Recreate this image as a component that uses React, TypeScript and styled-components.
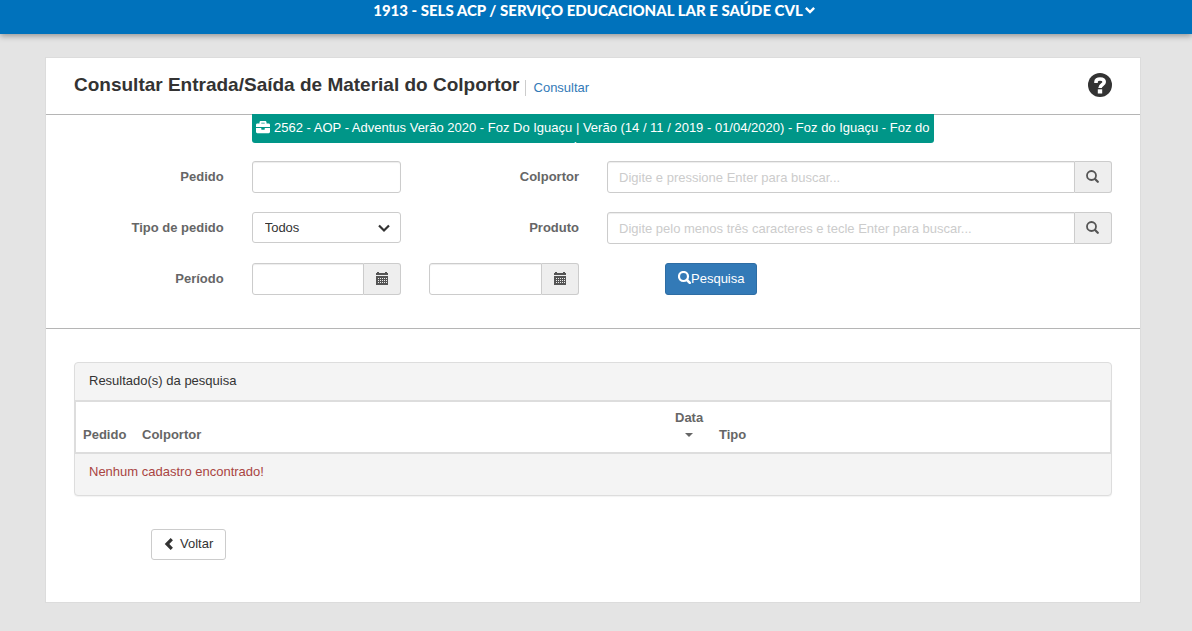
import React from "react";
import styled, { createGlobalStyle } from "styled-components";
import { FaBriefcase } from "react-icons/fa";

const GlobalStyle = createGlobalStyle`
  *, *::before, *::after { box-sizing: border-box; }
  body {
    margin: 0;
    background: #e4e4e4;
    color: #333;
    font: 13px/18px "Liberation Sans", Arial, sans-serif;
  }
  input, select, button { font: inherit; color: inherit; }
`;

const TopBar = styled.header`
  display: flex;
  justify-content: center;
  height: 34px;
  padding-right: 4px;
  background: #0072bc;
  box-shadow: 0 2px 6px rgba(0, 0, 0, 0.35);
`;

const UnitButton = styled.button`
  display: flex;
  align-items: center;
  gap: 2px;
  height: 20px;
  padding: 0;
  border: 0;
  background: none;
  color: #fff;
  font: 900 15px/20px Lato, sans-serif;
  cursor: pointer;
`;

const Page = styled.main`
  padding: 23px 51px 28px 45px;
`;

const Card = styled.section`
  border: 1px solid #dcdcdc;
  background: #fff;
`;

const CardHeader = styled.div`
  display: flex;
  align-items: center;
  height: 57px;
  padding: 0 28px 2px;
  border-bottom: 1px solid #b5b5b5;
`;

const Title = styled.h1`
  margin: 0;
  font-size: 19px;
  line-height: 24px;
`;

const Crumb = styled.a`
  margin: 6px auto 0 5px;
  padding-left: 8px;
  border-left: 1px solid #ccc;
  color: #337ab7;
  line-height: 16px;
  text-decoration: none;
`;

const HelpButton = styled.button`
  display: flex;
  padding: 0;
  border: 0;
  background: none;
  cursor: pointer;
`;

const SearchForm = styled.form`
  display: grid;
  grid-template-columns: repeat(6, 1fr);
  column-gap: 28px;
  row-gap: 19px;
  padding: 0 28px 33px;
  border-bottom: 1px solid #b5b5b5;
`;

const Campaign = styled.div`
  grid-column: 2 / span 4;
  height: 29px;
  margin: -1px 0;
  padding: 4px 2px 0;
  overflow: hidden;
  border-radius: 0 0 3px 3px;
  background: #009688;
  color: #fff;
  line-height: 19px;
  text-align: center;

  svg { vertical-align: -2px; }
`;

const Label = styled.label<{ $col?: number }>`
  grid-column-start: ${(p) => p.$col ?? 1};
  padding-top: 7px;
  color: #666;
  font-weight: bold;
  text-align: right;
`;

const fieldFrame = `
  width: 100%;
  height: 32px;
  border: 1px solid #ccc;
  border-radius: 3px;
  background: #fff;
`;

const TextInput = styled.input`
  ${fieldFrame}
  min-width: 0;
  padding: 0 11px;
  box-shadow: inset 0 1px 1px rgba(0, 0, 0, 0.075);
  &::placeholder { color: #ccc; opacity: 1; }
`;

const Group = styled.div<{ $span?: number }>`
  grid-column-end: span ${(p) => p.$span ?? 1};
  display: flex;
  min-width: 0;

  ${TextInput} {
    flex: 1;
    border-radius: 3px 0 0 3px;
  }
`;

const AddOn = styled.button`
  display: flex;
  flex: none;
  align-items: center;
  justify-content: center;
  width: 37px;
  height: 32px;
  padding: 0 1px 1px 0;
  border: 1px solid #ccc;
  border-left: 0;
  border-radius: 0 3px 3px 0;
  background: #eee;
  color: #555;
`;

const SelectBox = styled.div`
  display: grid;
  align-items: center;
  height: 31px;

  > * { grid-area: 1 / 1; }
  svg { justify-self: end; margin-right: 11px; pointer-events: none; }
`;

const Select = styled.select`
  ${fieldFrame}
  height: 31px;
  padding: 0 12px;
  appearance: none;
`;

const SubmitButton = styled.button`
  grid-column: 4 / span 2;
  justify-self: start;
  display: flex;
  align-items: center;
  height: 32px;
  margin-left: 58px;
  padding: 0 12px;
  border: 1px solid #2e6da4;
  border-radius: 3px;
  background: #337ab7;
  color: #fff;
  cursor: pointer;

  svg { margin-bottom: 3px; }
`;

const Results = styled.section`
  margin: 33px 28px;
  border: 1px solid #ddd;
  border-radius: 4px;
  background: #f4f4f4;
  box-shadow: 0 1px 1px rgba(0, 0, 0, 0.05);
`;

const ResultsTitle = styled.h2`
  height: 38px;
  margin: 0;
  padding: 9px 14px;
  font-size: 13px;
  font-weight: normal;
  line-height: 18px;
`;

const ResultsTable = styled.table`
  width: 100%;
  border: 1px solid #ddd;
  border-collapse: separate;
  border-spacing: 0;
  outline: 1px solid #ddd;
  background: #fff;
  table-layout: fixed;
  color: #666;
`;

const Th = styled.th<{ $width?: string }>`
  width: ${(p) => p.$width ?? "auto"};
  height: 50px;
  padding: 7px 7px 9px;
  line-height: 17px;
  text-align: left;
  vertical-align: bottom;
`;

const SortButton = styled.button`
  display: flex;
  flex-direction: column;
  align-items: center;
  padding: 0;
  border: 0;
  background: none;
  font-weight: bold;

  &::after {
    content: "";
    margin: 7px 0 6px;
    border: 4px solid transparent;
    border-top-color: currentColor;
    border-bottom: 0;
  }
`;

const EmptyNote = styled.p`
  height: 42px;
  margin: 0;
  padding: 10px 14px;
  color: #a94442;
`;

const BackButton = styled.button`
  display: flex;
  align-items: center;
  gap: 7px;
  height: 31px;
  margin: 0 0 42px 105px;
  padding: 0 12px 2px;
  border: 1px solid #ccc;
  border-radius: 3px;
  background: #fff;
  cursor: pointer;
`;

const SearchIcon = ({ weight = 1.8 }: { weight?: number }) => (
  <svg width="13" height="13" viewBox="0 0 13 13" fill="none" stroke="currentColor" aria-hidden="true">
    <circle cx="5.500" cy="5.500" r="4.500" strokeWidth={weight} />
    <path d="M9 9l2.800 2.800" strokeWidth={weight + 0.4} strokeLinecap="round" />
  </svg>
);

const CalendarIcon = () => (
  <svg width="12" height="13" viewBox="0 0 12 13" fill="currentColor" aria-hidden="true">
    <path d="M0 1h1V0h2v1h6V0h2v1h1v2H0z" />
    <path
      fillRule="evenodd"
      d="M0 4h12v9H0zM2 6v1h1V6zM4 6v1h1V6zM6 6v1h1V6zM8 6v1h1V6zM10 6v1h1V6zM2 8v1h1V8zM4 8v1h1V8zM6 8v1h1V8zM8 8v1h1V8zM10 8v1h1V8zM2 10v1h1v-1zM4 10v1h1v-1zM6 10v1h1v-1zM8 10v1h1v-1zM10 10v1h1v-1z"
    />
  </svg>
);

const ChevronDown = ({ size = 12, weight = 2.2 }: { size?: number; weight?: number }) => (
  <svg width={size} height={size} viewBox="0 0 12 12" fill="none" stroke="currentColor" strokeWidth={weight} aria-hidden="true">
    <path d="M1 3.5l5 5 5-5" />
  </svg>
);

const ChevronLeft = () => (
  <svg width="9" height="12" viewBox="0 0 9 12" fill="none" stroke="currentColor" strokeWidth="3.2" aria-hidden="true">
    <path d="M7.8 1.2L3 6l4.8 4.8" />
  </svg>
);

const HelpIcon = () => (
  <svg width="24" height="24" viewBox="0 0 24 24" aria-hidden="true">
    <circle cx="12" cy="12" r="12" fill="#333" />
    <path d="M8 10V9c0-2 1.500-3 4-3s4.200 1 4.200 3c0 3-4.200 2.600-4.200 6" fill="none" stroke="#fff" strokeWidth="3.600" />
    <path d="M9.800 16.300h4.400v4.200H9.800z" fill="#fff" />
  </svg>
);

const App = () => (
  <>
    <GlobalStyle />
    <TopBar>
      <UnitButton type="button">
        1913 - SELS ACP / SERVIÇO EDUCACIONAL LAR E SAÚDE CVL
        <ChevronDown size={10} weight={3} />
      </UnitButton>
    </TopBar>
    <Page>
      <Card>
        <CardHeader>
          <Title>Consultar Entrada/Saída de Material do Colportor</Title>
          <Crumb href="#consultar">Consultar</Crumb>
          <HelpButton type="button" aria-label="Ajuda">
            <HelpIcon />
          </HelpButton>
        </CardHeader>
        <SearchForm onSubmit={(e) => e.preventDefault()}>
          <Campaign>
            <FaBriefcase size={14} /> 2562 - AOP - Adventus Verão 2020 - Foz Do Iguaçu | Verão (14 / 11 / 2019 -
            01/04/2020) - Foz do Iguaçu - Foz do Iguaçu
          </Campaign>

          <Label htmlFor="pedido">Pedido</Label>
          <TextInput id="pedido" />
          <Label htmlFor="colportor" $col={3}>Colportor</Label>
          <Group $span={3}>
            <TextInput id="colportor" placeholder="Digite e pressione Enter para buscar..." />
            <AddOn type="button" aria-label="Buscar colportor"><SearchIcon /></AddOn>
          </Group>

          <Label htmlFor="tipo">Tipo de pedido</Label>
          <SelectBox>
            <Select id="tipo" defaultValue="Todos">
              <option>Todos</option>
            </Select>
            <ChevronDown />
          </SelectBox>
          <Label htmlFor="produto" $col={3}>Produto</Label>
          <Group $span={3}>
            <TextInput id="produto" placeholder="Digite pelo menos três caracteres e tecle Enter para buscar..." />
            <AddOn type="button" aria-label="Buscar produto"><SearchIcon /></AddOn>
          </Group>

          <Label htmlFor="inicio">Período</Label>
          <Group>
            <TextInput id="inicio" />
            <AddOn type="button" aria-label="Data inicial"><CalendarIcon /></AddOn>
          </Group>
          <Group>
            <TextInput id="fim" aria-label="Fim do período" />
            <AddOn type="button" aria-label="Data final"><CalendarIcon /></AddOn>
          </Group>
          <SubmitButton type="submit"><SearchIcon weight={2.2} />Pesquisa</SubmitButton>
        </SearchForm>

        <Results>
          <ResultsTitle>Resultado(s) da pesquisa</ResultsTitle>
          <ResultsTable>
            <thead>
              <tr>
                <Th $width="59px">Pedido</Th>
                <Th>Colportor</Th>
                <Th $width="44px"><SortButton type="button">Data</SortButton></Th>
                <Th $width="398px">Tipo</Th>
              </tr>
            </thead>
          </ResultsTable>
          <EmptyNote>Nenhum cadastro encontrado!</EmptyNote>
        </Results>
        <BackButton type="button"><ChevronLeft />Voltar</BackButton>
      </Card>
    </Page>
  </>
);

export default App;
